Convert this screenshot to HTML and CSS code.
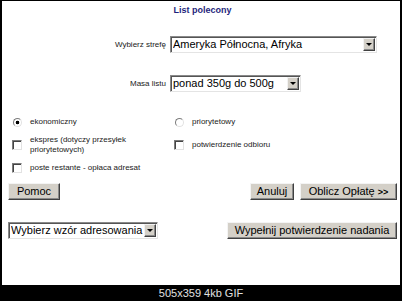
FILE: index.html
```html
<!DOCTYPE html>
<html lang="pl">
<head>
<meta charset="utf-8">
<title>List polecony</title>
<link rel="stylesheet" href="styles.css">
</head>
<body>
<div class="shot">
  <form class="form">
    <h1 class="title">List polecony</h1>

    <div class="field field-zone">
      <span class="field-label">Wybierz strefę</span>
      <div class="select select-zone"><span class="select-value">Ameryka Północna, Afryka</span><span class="select-btn"><i class="arrow"></i></span></div>
    </div>

    <div class="field field-mass">
      <span class="field-label">Masa listu</span>
      <div class="select select-mass"><span class="select-value">ponad 350g do 500g</span><span class="select-btn"><i class="arrow"></i></span></div>
    </div>

    <div class="options">
      <label class="opt"><span class="mark"><input class="radio" type="radio" name="tryb" checked></span>ekonomiczny</label>
      <label class="opt"><span class="mark"><input class="radio" type="radio" name="tryb"></span>priorytetowy</label>
      <label class="opt"><span class="mark"><input class="check" type="checkbox"></span><span>ekspres (dotyczy przesyłek<br>priorytetowych)</span></label>
      <label class="opt"><span class="mark"><input class="check" type="checkbox"></span>potwierdzenie odbioru</label>
      <label class="opt"><span class="mark"><input class="check" type="checkbox"></span>poste restante - opłaca adresat</label>
    </div>

    <div class="actions">
      <button type="button" class="btn btn-help">Pomoc</button>
      <button type="button" class="btn btn-cancel">Anuluj</button>
      <button type="button" class="btn btn-calc">Oblicz Opłatę <b class="chev">&gt;&gt;</b></button>
    </div>

    <div class="bottom">
      <div class="select select-tpl"><span class="select-value">Wybierz wzór adresowania</span><span class="select-btn"><i class="arrow"></i></span></div>
      <button type="button" class="btn btn-fill">Wypełnij potwierdzenie nadania</button>
    </div>
  </form>
  <div class="caption">505x359 4kb GIF</div>
</div>
</body>
</html>
```

FILE: styles.css
```css
html, body {
  margin: 0;
  padding: 0;
  background: #000;
}
body {
  width: 402px;
  height: 301px;
  overflow: hidden;
  font-family: "Liberation Sans", Arial, sans-serif;
}
.shot {
  display: flex;
  flex-direction: column;
  height: 301px;
}
.form {
  margin: 1px 2px 0 2px;
  height: 284px;
  box-sizing: border-box;
  padding: 0 3px 0 6px;
  background: #fff;
  display: flex;
  flex-direction: column;
}
.title {
  margin: 4px 0 0;
  font-size: 9px;
  line-height: 11px;
  font-weight: bold;
  color: #1f1f7c;
  text-align: center;
}
.field {
  display: flex;
  align-items: center;
  gap: 4px;
  height: 17px;
}
.field-zone { margin-top: 20px; }
.field-mass { margin-top: 22px; }
.field-label {
  width: 158px;
  text-align: right;
  font-size: 8px;
  line-height: 10px;
  color: #1a1a1a;
}
.select {
  box-sizing: border-box;
  height: 17px;
  display: flex;
  align-items: center;
  background: #fff;
  border: 1px solid;
  border-color: #8a8a8a #e4e4e4 #e4e4e4 #8a8a8a;
  box-shadow: inset 1px 1px 0 #555;
  padding: 0 1px 0 2px;
  font-size: 11px;
  color: #000;
}
.select-zone { width: 207px; }
.select-mass { width: 131px; }
.select-tpl { width: 150px; }
.select-value {
  flex: 1;
  white-space: nowrap;
  overflow: hidden;
  line-height: 13px;
}
.select-btn {
  flex: none;
  width: 12px;
  height: 13px;
  box-sizing: border-box;
  background: #d4d0c8;
  border: 1px solid;
  border-color: #f2f2f2 #404040 #404040 #f2f2f2;
  box-shadow: inset -1px -1px 0 #8a8a8a;
  display: flex;
  align-items: center;
  justify-content: center;
}
.arrow {
  width: 0;
  height: 0;
  border-left: 3px solid transparent;
  border-right: 3px solid transparent;
  border-top: 3px solid #000;
}
.options {
  margin-top: 24px;
  display: grid;
  grid-template-columns: 162px 1fr;
  grid-template-rows: 12px 20px 12px;
  row-gap: 7px;
}
.opt {
  display: flex;
  align-items: center;
  font-size: 8px;
  line-height: 10px;
  color: #1a1a1a;
}
.mark {
  flex: none;
  width: 10px;
  height: 10px;
  margin: 0 8px 0 4px;
  display: flex;
  align-items: center;
  justify-content: center;
}
.radio, .check {
  appearance: none;
  -webkit-appearance: none;
  margin: 0;
  box-sizing: border-box;
  background-color: #fff;
  border: 1px solid;
  border-color: #7c7c7c #e2e2e2 #e2e2e2 #7c7c7c;
}
.radio {
  width: 9px;
  height: 9px;
  border-radius: 50%;
}
.radio:checked {
  background: radial-gradient(circle at center, #000 0 1.6px, #fff 2.1px);
}
.check {
  width: 10px;
  height: 10px;
  box-shadow: inset 1px 1px 0 #444;
}
.actions {
  margin-top: 9px;
  display: flex;
  gap: 6px;
}
.btn {
  box-sizing: border-box;
  height: 17px;
  margin: 0;
  padding: 0;
  font: 11px/13px "Liberation Sans", Arial, sans-serif;
  color: #000;
  background: #d4d0c8;
  border: 1px solid;
  border-color: #f4f4f4 #404040 #404040 #f4f4f4;
  box-shadow: inset -1px -1px 0 #8a8a8a;
  border-radius: 0;
  white-space: nowrap;
}
.btn-help { width: 52px; margin-right: auto; }
.btn-cancel { width: 44px; }
.btn-calc { width: 97px; }
.chev { font-size: 9px; }
.bottom {
  margin-top: 22px;
  display: flex;
  justify-content: space-between;
  align-items: center;
}
.btn-fill { width: 170px; }
.caption {
  height: 16px;
  line-height: 16px;
  text-align: center;
  color: #e0e0e0;
  font-size: 11px;
}
```
